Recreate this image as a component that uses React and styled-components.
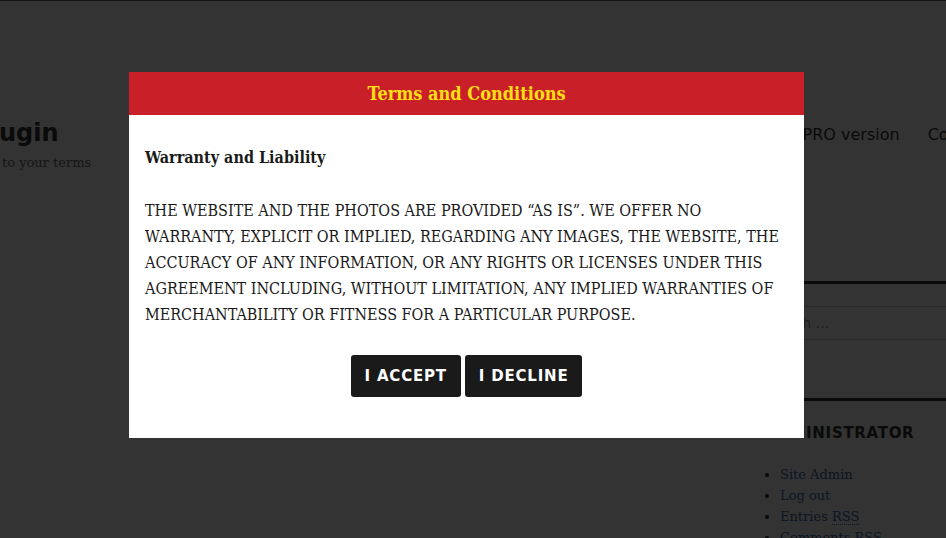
import styled, { createGlobalStyle } from "styled-components";

const GlobalStyle = createGlobalStyle`
  html, body {
    margin: 0;
    padding: 0;
    background: #fff;
    overflow: hidden;
  }
  body {
    font-family: "DejaVu Serif", serif;
    color: #333;
  }
`

const Page = styled.div`
  width: 1000px;
  height: 538px;
  border-top: 1px solid #555;
  display: grid;
  grid-template-columns: 765px 235px;
  grid-template-rows: 172px 1fr;
`

const Branding = styled.div`
  padding-top: 116px;
`

const SiteTitle = styled.div`
  font-family: "DejaVu Sans", sans-serif;
  font-weight: bold;
  font-size: 24px;
  line-height: 32px;
  color: #333;
  margin-left: -1px;
`

const SiteDescription = styled.div`
  font-family: "DejaVu Serif", serif;
  font-size: 13px;
  line-height: 22px;
  margin-top: 3px;
  margin-left: 2px;
  color: #707070;
`

const Nav = styled.nav`
  padding-top: 122px;
  padding-left: 4px;
  display: flex;
  gap: 28px;
  white-space: nowrap;
`

const NavItem = styled.a`
  font-family: "DejaVu Sans", sans-serif;
  font-size: 16px;
  line-height: 24px;
  color: #333;
  text-decoration: none;
`

const Content = styled.main``

const Sidebar = styled.aside`
  padding-top: 108px;
`

const Widget = styled.section`
  border-top: 3px solid #333;
  padding-top: ${(p) => p.$top || 22}px;
  padding-bottom: ${(p) => p.$bottom || 0}px;
`

const SearchField = styled.div`
  height: 32px;
  border: 1px solid #d0d0d0;
  margin-left: -4px;
  padding-left: 1px;
  font-family: "DejaVu Sans", sans-serif;
  font-size: 14px;
  line-height: 32px;
  color: #9a9a9a;
`

const WidgetTitle = styled.h2`
  margin: 0 0 21px;
  font-family: "DejaVu Sans", sans-serif;
  font-weight: bold;
  font-size: 15px;
  line-height: 20px;
  letter-spacing: 0.7px;
  text-transform: uppercase;
  color: #333;
`

const LinkList = styled.ul`
  margin: 0;
  padding-left: 15px;
  list-style: disc;
  font-family: "DejaVu Serif", serif;
  font-size: 13px;
  line-height: 21px;
`

const LinkItem = styled.li`
  color: #333;
  a {
    color: #3b6ea8;
    text-decoration: none;
  }
  abbr {
    text-decoration: none;
    border-bottom: 1px dotted #3b6ea8;
  }
`

const Overlay = styled.div`
  position: fixed;
  inset: 0;
  background: rgba(0, 0, 0, 0.8);
`

const Modal = styled.div`
  position: absolute;
  left: 129px;
  top: 72px;
  width: 675px;
  background: #fff;
`

const ModalHeader = styled.header`
  height: 43px;
  background: #c91f28;
  display: flex;
  align-items: center;
  justify-content: center;
`

const ModalTitle = styled.h1`
  margin: 0;
  font-family: "DejaVu Serif Condensed", "DejaVu Serif", serif;
  font-stretch: condensed;
  font-weight: bold;
  font-size: 18px;
  color: #ffe014;
`

const ModalBody = styled.div`
  padding: 30px 16px 41px;
  color: #1a1a1a;
  font-family: "DejaVu Serif Condensed", "DejaVu Serif", serif;
  font-stretch: condensed;
`

const Subheading = styled.h3`
  margin: 0 0 27px;
  font-size: 16px;
  font-weight: bold;
  line-height: 26px;
`

const Terms = styled.p`
  margin: 0 0 27px;
  font-size: 16px;
  line-height: 26px;
`

const Actions = styled.div`
  display: flex;
  justify-content: center;
  gap: 4px;
`

const Button = styled.button`
  height: 42px;
  padding: 0 14px;
  border: none;
  border-radius: 3px;
  background: #1a1a1a;
  color: #fff;
  font-family: "DejaVu Sans", sans-serif;
  font-weight: bold;
  font-size: 15px;
  letter-spacing: 0.8px;
  text-transform: uppercase;
  cursor: pointer;
`

export default function App() {
  return (
    <>
      <GlobalStyle />
      <Page>
        <Branding>
          <SiteTitle>ugin</SiteTitle>
          <SiteDescription>to your terms</SiteDescription>
        </Branding>
        <Nav>
          <NavItem href="#">Get PRO version</NavItem>
          <NavItem href="#">Contact</NavItem>
        </Nav>
        <Content />
        <Sidebar>
          <Widget $top={22} $bottom={58}>
            <SearchField>Search …</SearchField>
          </Widget>
          <Widget $top={22}>
            <WidgetTitle>Administrator</WidgetTitle>
            <LinkList>
              <LinkItem><a href="#">Site Admin</a></LinkItem>
              <LinkItem><a href="#">Log out</a></LinkItem>
              <LinkItem><a href="#">Entries <abbr>RSS</abbr></a></LinkItem>
              <LinkItem><a href="#">Comments <abbr>RSS</abbr></a></LinkItem>
            </LinkList>
          </Widget>
        </Sidebar>
      </Page>
      <Overlay>
        <Modal>
          <ModalHeader>
            <ModalTitle>Terms and Conditions</ModalTitle>
          </ModalHeader>
          <ModalBody>
            <Subheading>Warranty and Liability</Subheading>
            <Terms>
              THE WEBSITE AND THE PHOTOS ARE PROVIDED “AS IS”. WE OFFER NO WARRANTY, EXPLICIT OR
              IMPLIED, REGARDING ANY IMAGES, THE WEBSITE, THE ACCURACY OF ANY INFORMATION, OR ANY
              RIGHTS OR LICENSES UNDER THIS AGREEMENT INCLUDING, WITHOUT LIMITATION, ANY IMPLIED
              WARRANTIES OF MERCHANTABILITY OR FITNESS FOR A PARTICULAR PURPOSE.
            </Terms>
            <Actions>
              <Button>I Accept</Button>
              <Button>I Decline</Button>
            </Actions>
          </ModalBody>
        </Modal>
      </Overlay>
    </>
  );
}
